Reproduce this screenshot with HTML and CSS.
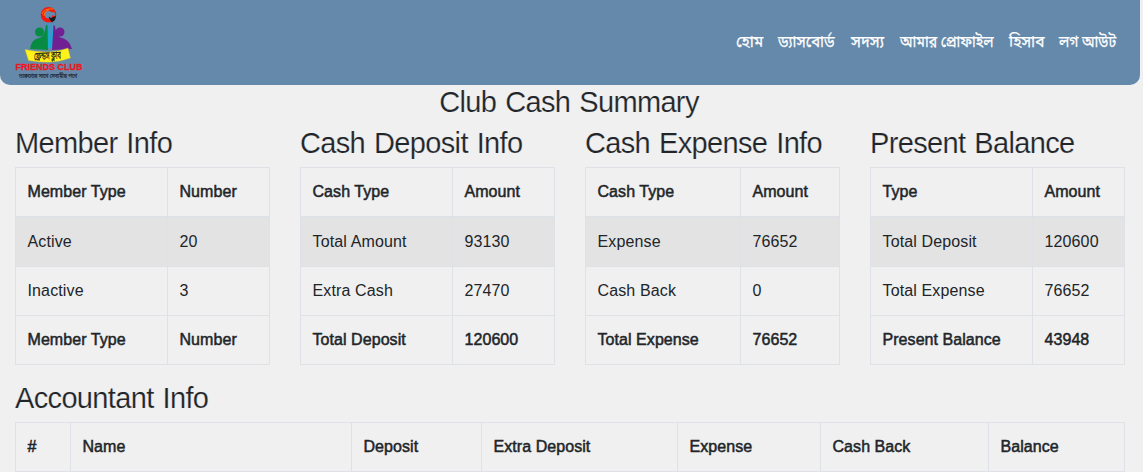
FILE: index.html
```html
<!DOCTYPE html>
<html lang="bn">
<head>
<meta charset="utf-8">
<title>Friends Club</title>
<link rel="stylesheet" href="styles.css">
</head>
<body>
<header class="navbar">
  <svg class="logo" viewBox="0 0 76 80" width="76" height="80" role="img" aria-label="Friends Club">
    <path d="M31 20L29 42L36 46L45 42L41 20L38 22L36 19Z" fill="#4a92c0"/>
    <path d="M35 22L32 45H42L39 24L37 38Z" fill="#1ba9d4"/>
    <path d="M16 46C17 39 20 36 25 35C29 34 31 30 32 22L33.500 22L34 47Z" fill="#078b43"/>
    <path d="M38 47L39.500 22L41 23C42 31 44 34 48 35C54 37 56 40 58 46Z" fill="#702092"/>
    <circle cx="25.500" cy="29" r="4.500" fill="#078b43"/>
    <circle cx="46" cy="29" r="4.500" fill="#702092"/>
    <circle cx="34.500" cy="11.800" r="5.800" fill="none" stroke="#f5180c" stroke-width="4"/>
    <path d="M28 11Q30 5 39 6M30 13Q30 8 35 7" fill="none" stroke="#ff9c12" stroke-width=".7"/>
    <path d="M34.500 13.500L37 15L42 13L41 17L38 19.500L36 17Z" fill="#161a22"/>
    <path d="M37 9L41 9.500L41 13L37 12Z" fill="#6389ab"/>
    <path d="M11 46.500Q36 52 54 45L56.500 55Q38 62 14.500 57.500Z" fill="#fff21a" stroke="#c1b637" stroke-width=".4"/>
    <text class="ribbon" x="20" y="56.500" textLength="27" lengthAdjust="spacingAndGlyphs" transform="rotate(-3 34 54)">ফ্রেন্ডস ক্লাব</text>
    <text class="club" x="1.500" y="67" textLength="67" lengthAdjust="spacingAndGlyphs">FRIENDS CLUB</text>
    <text class="motto" x="5" y="74.500" textLength="58" lengthAdjust="spacingAndGlyphs">তারুণ্যের সাথে সেবামীয় পথে</text>
  </svg>
  <nav class="menu">
    <a class="home">হোম</a><a class="dashboard">ড্যাসবোর্ড</a><a class="members">সদস্য</a><a class="profile">আমার প্রোফাইল</a><a class="accounts">হিসাব</a><a class="logout">লগ আউট</a>
  </nav>
</header>
<main>
  <h1 class="heading title">Club Cash Summary</h1>
  <div class="summary">
    <section>
      <h2 class="heading">Member Info</h2>
      <table class="table"><colgroup><col class="w152"><col></colgroup>
        <thead><tr><th>Member Type</th><th>Number</th></tr></thead>
        <tbody><tr class="striped"><td>Active</td><td>20</td></tr><tr><td>Inactive</td><td>3</td></tr><tr><th>Member Type</th><th>Number</th></tr></tbody>
      </table>
    </section>
    <section>
      <h2 class="heading">Cash Deposit Info</h2>
      <table class="table"><colgroup><col class="w152"><col></colgroup>
        <thead><tr><th>Cash Type</th><th>Amount</th></tr></thead>
        <tbody><tr class="striped"><td>Total Amount</td><td>93130</td></tr><tr><td>Extra Cash</td><td>27470</td></tr><tr><th>Total Deposit</th><th>120600</th></tr></tbody>
      </table>
    </section>
    <section>
      <h2 class="heading">Cash Expense Info</h2>
      <table class="table"><colgroup><col class="w155"><col></colgroup>
        <thead><tr><th>Cash Type</th><th>Amount</th></tr></thead>
        <tbody><tr class="striped"><td>Expense</td><td>76652</td></tr><tr><td>Cash Back</td><td>0</td></tr><tr><th>Total Expense</th><th>76652</th></tr></tbody>
      </table>
    </section>
    <section>
      <h2 class="heading">Present Balance</h2>
      <table class="table"><colgroup><col class="w162"><col></colgroup>
        <thead><tr><th>Type</th><th>Amount</th></tr></thead>
        <tbody><tr class="striped"><td>Total Deposit</td><td>120600</td></tr><tr><td>Total Expense</td><td>76652</td></tr><tr><th>Present Balance</th><th>43948</th></tr></tbody>
      </table>
    </section>
  </div>
  <section class="accountants">
    <h2 class="heading">Accountant Info</h2>
    <table class="table"><colgroup><col class="w55"><col class="w281"><col class="w130"><col class="w196"><col class="w143"><col class="w168"><col></colgroup>
      <thead><tr><th>#</th><th>Name</th><th>Deposit</th><th>Extra Deposit</th><th>Expense</th><th>Cash Back</th><th>Balance</th></tr></thead>
    </table>
  </section>
</main>
</body>
</html>
```
FILE: styles.css
```css
* { box-sizing: border-box; }
html { overflow: hidden; }
body {
  margin: 0;
  background: #f0f0f0;
  color: #212529;
  font: 16px/24px "Liberation Sans", Arial, sans-serif;
  overflow: hidden;
}
.navbar {
  width: 1140px;
  height: 85px;
  padding: 3px 23px 0 14px;
  display: flex;
  justify-content: space-between;
  background: #6589aa;
  border-radius: 0 0 10px 10px;
}
.logo { display: block; overflow: visible; }
.ribbon { font: 11px "Noto Sans Bengali", "Noto Sans", sans-serif; fill: #171714; stroke: #171714; stroke-width: .2px; }
.club { font: bold 9.5px "Liberation Sans", sans-serif; fill: #ef1520; stroke: #ef1520; stroke-width: .3px; }
.motto { font: 6px "Noto Sans Bengali", "Noto Sans", sans-serif; fill: #202836; stroke: #202836; stroke-width: .2px; }
.menu { display: flex; gap: 15px; padding-top: 28px; }
.menu a {
  color: #fff;
  font: 16px/24px "Noto Sans Bengali", "Noto Sans", sans-serif;
  white-space: nowrap;
  transform-origin: left center;
  -webkit-text-stroke: .25px #fff;
}
.home { width: 27px; transform: scaleX(.96); }
.dashboard { width: 58px; transform: scaleX(.93); }
.members { width: 34px; }
.profile { width: 94px; transform: scaleX(.88); }
.accounts { width: 35px; transform: scaleX(.97); }
.logout { width: 58px; transform: scaleX(.88); }
.heading {
  margin: 0 0 6px;
  font-size: 29px;
  line-height: 35px;
  font-weight: 400;
  letter-spacing: -.65px;
  word-spacing: 1.5px;
  white-space: nowrap;
  -webkit-text-stroke: .2px #f0f0f0;
}
.title { width: 1138px; text-align: center; }
.summary {
  display: grid;
  grid-template-columns: repeat(4, 255px);
  gap: 30px;
  padding-left: 15px;
}
.accountants { width: 1110px; margin-left: 15px; }
.table {
  width: 100%;
  margin-bottom: 16px;
  table-layout: fixed;
  border-collapse: collapse;
  border: 1px solid #dee2e6;
}
.table th, .table td {
  padding: 12px 11.5px;
  border: 1px solid #dee2e6;
  text-align: left;
  font-weight: 400;
  white-space: nowrap;
}
.table td { letter-spacing: .13px; }
.table th { letter-spacing: .06px; -webkit-text-stroke: .5px #212529; }
.table thead th { border-bottom-width: 2px; }
.striped { background: rgba(0, 0, 0, .05); }
.w55 { width: 55px; }
.w130 { width: 130px; }
.w143 { width: 143px; }
.w152 { width: 152px; }
.w155 { width: 155px; }
.w162 { width: 162px; }
.w168 { width: 168px; }
.w196 { width: 196px; }
.w281 { width: 281px; }
```
